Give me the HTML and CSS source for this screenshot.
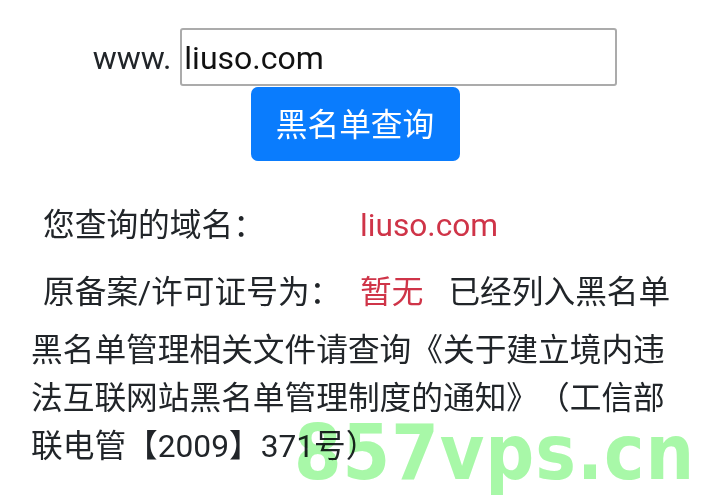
FILE: index.html
```html
<!DOCTYPE html>
<html lang="zh-CN">
<head>
<meta charset="utf-8">
<title>黑名单查询</title>
<link rel="stylesheet" href="styles.css">
</head>
<body>
<form class="search">
  <div class="search-row">
    <span class="prefix">www.</span>
    <input class="domain-input" type="text" value="liuso.com">
  </div>
  <button class="btn-primary" type="button">黑名单查询</button>
</form>
<div class="result">
  <div class="label">您查询的域名：</div>
  <div class="value"><span class="danger">liuso.com</span></div>
  <div class="label">原备案/许可证号为：</div>
  <div class="value"><span class="danger">暂无</span><span class="status">已经列入黑名单</span></div>
</div>
<p class="notice">黑名单管理相关文件请查询《关于建立境内违法互联网站黑名单管理制度的通知》（工信部联电管【2009】371号）</p>
<div class="watermark">857vps.cn</div>
</body>
</html>
```
FILE: styles.css
```css
html, body {
  margin: 0;
  padding: 0;
  background: #ffffff;
}
body {
  width: 710px;
  height: 500px;
  overflow: hidden;
  font-family: Roboto, "Noto Sans CJK SC", sans-serif;
  font-size: 31.7px;
  color: #212529;
  position: relative;
  text-spacing-trim: space-all;
}
.search {
  display: flex;
  flex-direction: column;
  align-items: center;
  padding-top: 28px;
  margin: 0;
}
.search-row {
  display: flex;
  align-items: center;
  gap: 9px;
}
.prefix {
  font-size: 32px;
  line-height: 40px;
  padding-top: 2px;
}
.domain-input {
  box-sizing: border-box;
  width: 437px;
  height: 58px;
  border: 2px solid #ababab;
  border-radius: 3px;
  padding: 2px 0 0 2px;
  font-family: Roboto, "Noto Sans CJK SC", sans-serif;
  font-size: 32px;
  color: #111111;
  background: #ffffff;
  outline: none;
}
.btn-primary {
  margin-top: 1px;
  width: 209px;
  height: 74px;
  border: none;
  border-radius: 7px;
  background: #0a7cfd;
  color: #ffffff;
  font-family: "Noto Sans CJK SC", Roboto, sans-serif;
  font-size: 31.7px;
  padding: 0 0 4px 0;
}
.result {
  display: grid;
  grid-template-columns: 317px 1fr;
  grid-auto-rows: 67px;
  align-items: center;
  margin-top: 31px;
  padding-left: 43px;
}
.label, .value {
  line-height: 48px;
  white-space: nowrap;
}
.danger {
  color: #cf3448;
}
.status {
  margin-left: 25px;
}
.notice {
  margin: 1px 0 0 0;
  padding: 0 30px 0 31px;
  line-height: 48px;
}
.watermark {
  position: absolute;
  left: 294px;
  top: 415px;
  font-family: "DejaVu Sans Condensed", "DejaVu Sans", sans-serif;
  font-weight: bold;
  font-size: 76px;
  letter-spacing: 1px;
  line-height: 1;
  color: #a8f8a8;
  mix-blend-mode: multiply;
  pointer-events: none;
  white-space: nowrap;
}
```
